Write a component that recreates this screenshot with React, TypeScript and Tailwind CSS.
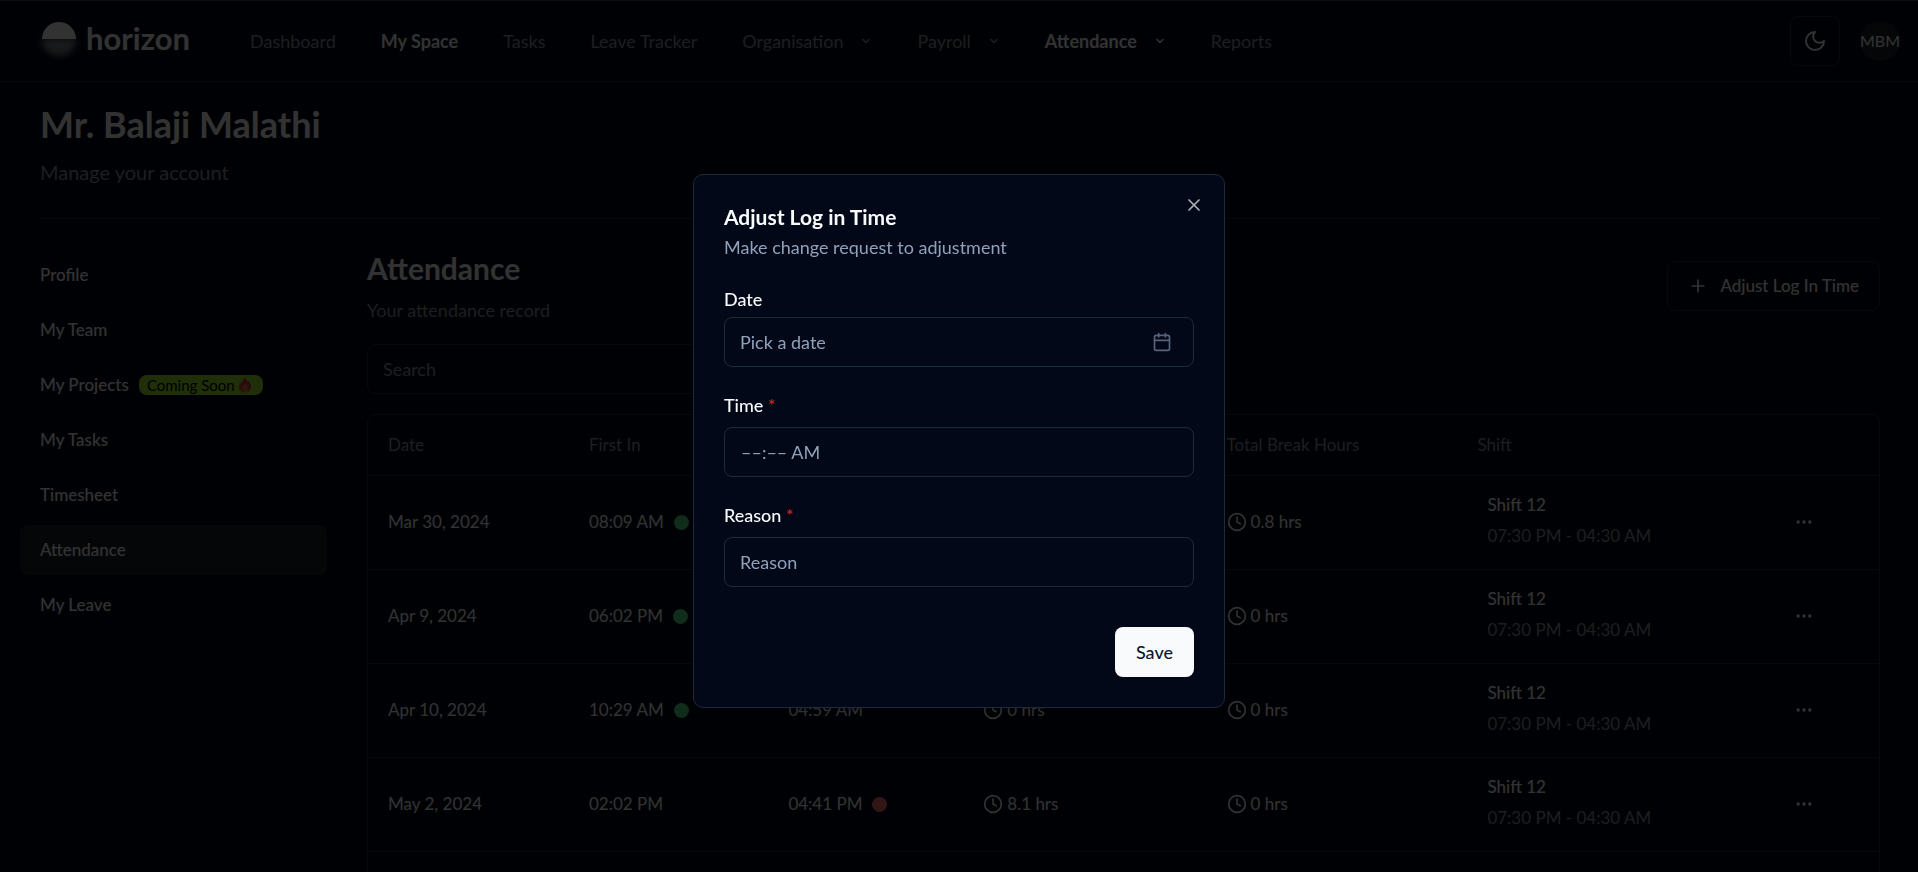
import React from "react";
import { Calendar, ChevronDown, Clock, MoreHorizontal, Plus, X } from "lucide-react";

type NavItem = { label: string; active?: boolean; menu?: boolean };

const navItems: NavItem[] = [
  { label: "Dashboard" },
  { label: "My Space", active: true },
  { label: "Tasks" },
  { label: "Leave Tracker" },
  { label: "Organisation", menu: true },
  { label: "Payroll", menu: true },
  { label: "Attendance", active: true, menu: true },
  { label: "Reports" },
];

const sideItems = ["Profile", "My Team", "My Projects", "My Tasks", "Timesheet", "Attendance", "My Leave"];

type Row = { date: string; first: string; onTime?: boolean; last: string; early?: boolean; total: string; rest: string };

const rows: Row[] = [
  { date: "Mar 30, 2024", first: "08:09 AM", onTime: true, last: "05:12 PM", total: "8.2 hrs", rest: "0.8 hrs" },
  { date: "Apr 9, 2024", first: "06:02 PM", onTime: true, last: "04:31 AM", total: "0 hrs", rest: "0 hrs" },
  { date: "Apr 10, 2024", first: "10:29 AM", onTime: true, last: "04:59 AM", total: "0 hrs", rest: "0 hrs" },
  { date: "May 2, 2024", first: "02:02 PM", last: "04:41 PM", early: true, total: "8.1 hrs", rest: "0 hrs" },
  { date: "May 3, 2024", first: "07:28 PM", last: "04:32 AM", total: "8 hrs", rest: "0 hrs" },
];

function Logo() {
  return (
    <a href="#" className="flex items-center gap-2">
      <svg width="38" height="46" viewBox="0 0 38 46" className="overflow-visible" aria-hidden="true">
        <defs>
          <filter id="glow" x="-40%" y="-60%" width="180%" height="220%">
            <feGaussianBlur stdDeviation="3" />
          </filter>
          <linearGradient id="fade" x1="0" y1="0" x2="0" y2="1">
            <stop offset="0" stopColor="#f8fafc" stopOpacity="0.55" />
            <stop offset="1" stopColor="#f8fafc" stopOpacity="0.45" />
          </linearGradient>
        </defs>
        <path d="M2 21h34a17 17 0 0 1-34 0Z" fill="url(#fade)" filter="url(#glow)" />
        <path d="M2 21a17 17 0 0 1 34 0Z" fill="#f8fafc" />
      </svg>
      <span className="pb-1.5 text-[31px] leading-8 font-bold">horizon</span>
    </a>
  );
}

function Header() {
  return (
    <header className="flex h-[82px] shrink-0 items-center border-b border-slate-800 pr-[18px] pl-10">
      <Logo />
      <nav className="ml-[60px] flex items-center gap-[45px]">
        {navItems.map((item) => (
          <a
            key={item.label}
            href="#"
            className={
              item.active
                ? "flex items-center gap-[17px] font-bold"
                : "flex items-center gap-[17px] text-[#8a949e]"
            }
          >
            {item.label}
            {item.menu && <ChevronDown className="size-3" strokeWidth={3} />}
          </a>
        ))}
      </nav>
      <div className="ml-auto flex items-center gap-5">
        <button
          type="button"
          aria-label="Toggle theme"
          className="flex size-[50px] items-center justify-center rounded-lg border border-slate-800"
        >
          <svg
            width="24"
            height="24"
            viewBox="0 0 24 24"
            fill="none"
            stroke="currentColor"
            strokeWidth="2"
            strokeLinecap="round"
            strokeLinejoin="round"
          >
            <path d="M12 3a6 6 0 0 0 9 9 9 9 0 1 1-9-9Z" />
          </svg>
        </button>
        <button
          type="button"
          className="flex size-10 items-center justify-center rounded-full bg-[#1c222c] text-[16px]"
        >
          MBM
        </button>
      </div>
    </header>
  );
}

function Flame() {
  return (
    <svg width="12" height="16" viewBox="0 0 13 16" aria-hidden="true">
      <path
        d="M6.800 0c.6 2.400 2 3.300 3.100 5 .4-.5.6-1 .6-1.700C12 5 13 7.400 13 9.700 13 13.400 10.200 16 6.500 16S0 13.400 0 9.900c0-2 .9-3.600 2-5 .1.900.4 1.500.9 2C3 4 4.500 1.600 6.800 0Z"
        fill="#c9402e"
      />
      <path d="M6.900 6c.3 1.900 3.200 3.300 3.200 6 0 2.300-1.600 4-3.700 4s-3.600-1.600-3.600-3.700C2.800 9.600 6 8.900 6.900 6Z" fill="#d97b38" />
    </svg>
  );
}

function Sidebar() {
  return (
    <aside className="w-[307px] shrink-0">
      <nav className="flex flex-col gap-[5px] text-[17px] font-medium">
        {sideItems.map((label) => (
          <a
            key={label}
            href="#"
            className={
              label === "Attendance"
                ? "flex h-[50px] items-center rounded-lg bg-[#1c222c] px-5"
                : "flex h-[50px] items-center rounded-lg px-5"
            }
          >
            {label}
            {label === "My Projects" && (
              <span className="ml-2.5 flex h-5 items-center gap-1 rounded-lg bg-[#a3e635] pr-3 pl-2 text-[15px] leading-5 font-normal text-black">
                Coming Soon
                <Flame />
              </span>
            )}
          </a>
        ))}
      </nav>
    </aside>
  );
}

function Dot({ className }: { className: string }) {
  return <span className={`ml-2.5 inline-block size-[15px] rounded-full ${className}`} />;
}

function Hours({ value }: { value: string }) {
  return (
    <span className="flex items-center gap-1">
      <Clock className="size-5" />
      {value}
    </span>
  );
}

function AttendanceTable() {
  return (
    <div className="mt-5 overflow-hidden rounded-lg border border-slate-800">
      <table className="w-full table-fixed text-left text-[17px]">
        <colgroup>
          <col className="w-[13.3%]" />
          <col className="w-[13.2%]" />
          <col className="w-[12.9%]" />
          <col className="w-[16.1%]" />
          <col className="w-[16.6%]" />
          <col className="w-[20%]" />
          <col />
        </colgroup>
        <thead>
          <tr className="h-[60px] border-b border-slate-800 text-[#8a949e]">
            <th className="px-5 font-normal">Date</th>
            <th className="px-5 font-normal">First In</th>
            <th className="px-5 font-normal">Last Out</th>
            <th className="px-5 font-normal">Total Hours</th>
            <th className="px-5 font-normal">Total Break Hours</th>
            <th className="px-5 font-normal">Shift</th>
            <th className="px-5" aria-label="Actions" />
          </tr>
        </thead>
        <tbody>
          {rows.map((row) => (
            <tr key={row.date} className="h-[94px] border-b border-slate-800">
              <td className="px-5">{row.date}</td>
              <td className="px-5">
                <span className="flex items-center">
                  {row.first}
                  {row.onTime && <Dot className="bg-[#4ade80]" />}
                </span>
              </td>
              <td className="px-5">
                <span className="flex items-center">
                  {row.last}
                  {row.early && <Dot className="bg-[#f87171]" />}
                </span>
              </td>
              <td className="px-5">
                <Hours value={row.total} />
              </td>
              <td className="px-5">
                <Hours value={row.rest} />
              </td>
              <td className="px-[30px] pb-1 leading-[31px]">
                <p className="font-medium">Shift 12</p>
                <p className="text-[#8a949e]">07:30 PM - 04:30 AM</p>
              </td>
              <td className="px-6">
                <button type="button" aria-label="Row actions" className="flex size-10 items-center justify-center">
                  <MoreHorizontal className="size-5" />
                </button>
              </td>
            </tr>
          ))}
        </tbody>
      </table>
    </div>
  );
}

function AdjustDialog() {
  return (
    <div
      role="dialog"
      aria-modal="true"
      aria-labelledby="dialog-title"
      className="relative w-full max-w-[532px] rounded-[10px] border border-slate-800 bg-[#020817] p-[30px] text-slate-50 shadow-lg"
    >
      <button type="button" aria-label="Close" className="absolute top-5 right-5 opacity-70">
        <X className="size-5" />
      </button>
      <h2 id="dialog-title" className="text-[21px] leading-6 font-bold">
        Adjust Log in Time
      </h2>
      <p className="mt-1.5 leading-6 text-slate-400">Make change request to adjustment</p>
      <form className="mt-[30px]" onSubmit={(e) => e.preventDefault()}>
        <label htmlFor="date" className="block leading-5 font-medium">
          Date
        </label>
        <button
          id="date"
          type="button"
          className="mt-2 flex h-[50px] w-full items-center justify-between rounded-lg border border-slate-800 pr-[21px] pl-[15px] text-slate-400"
        >
          Pick a date
          <Calendar className="size-5 opacity-60" />
        </button>
        <label htmlFor="time" className="mt-7 block leading-5 font-medium">
          Time <span className="text-[#dc2626]">*</span>
        </label>
        <input
          id="time"
          type="text"
          placeholder="––:–– AM"
          className="mt-3 h-[50px] w-full rounded-lg border border-slate-800 bg-transparent px-4 placeholder:text-slate-400"
        />
        <label htmlFor="reason" className="mt-7 block leading-5 font-medium">
          Reason <span className="text-[#dc2626]">*</span>
        </label>
        <input
          id="reason"
          type="text"
          placeholder="Reason"
          className="mt-3 h-[50px] w-full rounded-lg border border-slate-800 bg-transparent px-[15px] placeholder:text-slate-400"
        />
        <div className="mt-10 flex justify-end">
          <button type="submit" className="h-[50px] rounded-lg bg-slate-50 px-[21px] font-medium text-slate-900">
            Save
          </button>
        </div>
      </form>
    </div>
  );
}

export default function App() {
  return (
    <div className="relative flex h-screen flex-col overflow-hidden bg-[#020817] font-['Lato',sans-serif] text-[18px] leading-6 text-[#fafafa]">
      <Header />
      <main className="pr-[18px] pl-5">
        <div className="px-5 pt-[22px]">
          <h1 className="text-[36px] leading-10 font-bold">Mr. Balaji Malathi</h1>
          <p className="mt-[14px] text-[20px] leading-7 text-[#8a949e]">Manage your account</p>
          <hr className="mt-8 border-slate-800" />
        </div>
        <div className="flex gap-10 pt-[31px] pr-5">
          <Sidebar />
          <section className="min-w-0 flex-1">
            <div className="flex items-center justify-between">
              <div>
                <h2 className="text-[30px] leading-9 font-bold">Attendance</h2>
                <p className="mt-3 leading-6 text-[#8a949e]">Your attendance record</p>
              </div>
              <button
                type="button"
                className="flex h-[50px] items-center gap-3 rounded-lg border border-slate-800 px-5 text-[17px] font-medium"
              >
                <Plus className="size-5" />
                Adjust Log In Time
              </button>
            </div>
            <input
              type="search"
              aria-label="Search"
              placeholder="Search"
              className="mt-[22px] block h-[50px] w-full max-w-[480px] rounded-lg border border-slate-800 bg-transparent px-[15px] placeholder:text-[#8a949e]"
            />
            <AttendanceTable />
          </section>
        </div>
      </main>
      <div className="fixed inset-0 flex items-center justify-center border-t border-[#0b0e0b] bg-black/80 pt-2">
        <AdjustDialog />
      </div>
    </div>
  );
}
